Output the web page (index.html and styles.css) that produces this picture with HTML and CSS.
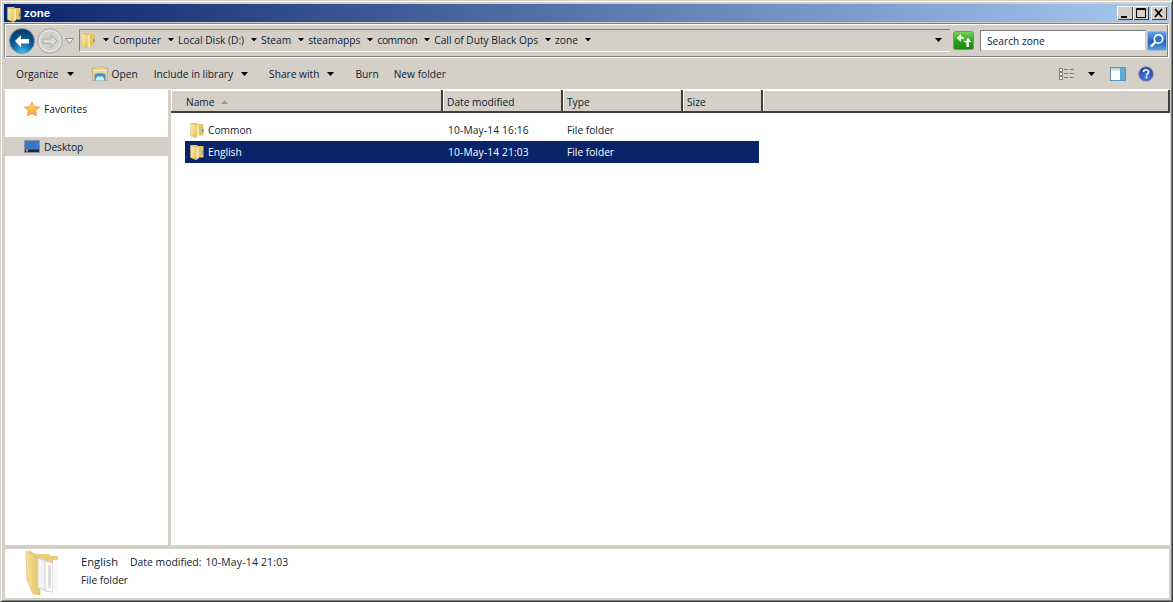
FILE: index.html
```html
<!DOCTYPE html>
<html lang="en">
<head>
<meta charset="utf-8">
<title>zone</title>
<link rel="stylesheet" href="styles.css">
</head>
<body>
<svg class="defs" width="0" height="0" aria-hidden="true">
  <defs>
    <linearGradient id="fg" x1="0" y1="0" x2="1" y2="1"><stop offset="0" stop-color="#fbf0b8"/><stop offset=".6" stop-color="#f0d47e"/><stop offset="1" stop-color="#dcb654"/></linearGradient>
    <symbol id="folder" viewBox="0 0 14 16">
      <path d="M1 1h6l1 1h5.500v11.500H8L5 15.500 1 13z" fill="#e4c266"/>
      <path d="M.5 1.500 6.500 3.500V16L.5 13.500z" fill="url(#fg)" stroke="#d8b85e" stroke-width=".5"/>
      <path d="M6.500 3.500 9 2.500V14L6.500 16z" fill="#f6e6a8"/>
      <path d="M12 7h1.500v3H12z" fill="#4f9ad0"/>
    </symbol>
    <symbol id="caret" viewBox="0 0 7 4"><path d="M0 0h7L3.500 4z" fill="#000"/></symbol>
  </defs>
</svg>
<div class="window">
  <header class="titlebar">
    <svg class="title-icon"><use href="#folder"/></svg>
    <span class="title-text">zone</span>
    <div class="win-buttons">
      <button class="win-btn"><svg width="16" height="14" viewBox="0 0 16 14"><path d="M4 10h6v2H4z" fill="#000"/></svg></button>
      <button class="win-btn"><svg width="16" height="14" viewBox="0 0 16 14"><path d="M3.500 2.500h9v9h-9zM3.500 3.500h9" fill="none" stroke="#000"/></svg></button>
      <button class="win-btn win-close"><svg width="16" height="14" viewBox="0 0 16 14"><path d="M4 3l7 8M11 3l-7 8" stroke="#000" stroke-width="1.700"/></svg></button>
    </div>
  </header>

  <nav class="addressbar">
    <div class="nav-orbs">
      <svg class="orb" viewBox="0 0 26 26">
        <defs><radialGradient id="ob" cx=".5" cy=".95" r=".9"><stop offset="0" stop-color="#36c3f2"/><stop offset=".5" stop-color="#0a5f9f"/><stop offset="1" stop-color="#063c6b"/></radialGradient></defs>
        <circle cx="13" cy="13" r="12.500" fill="url(#ob)" stroke="#8b97a5"/>
        <path d="M6 13l6-6v4h8v4.400h-8v4z" fill="#fff"/>
      </svg>
      <svg class="orb orb-off" viewBox="0 0 26 26">
        <circle cx="13" cy="13" r="12.200" fill="#d8d6d0" stroke="#a8a8a6"/>
        <circle cx="13" cy="13" r="10.500" fill="#d2d0cb" stroke="#eeeeea"/>
        <path d="M20 13l-6-6v4H6v4.400h8v4z" fill="#dcdcd8" stroke="#a9a9a6"/>
      </svg>
      <svg class="orb-drop" viewBox="0 0 9 6"><path d="M.5.500h8L4.500 5.500z" fill="#eeeeea" stroke="#8e8e8c"/></svg>
    </div>
    <div class="crumbs">
      <svg class="crumb-folder"><use href="#folder"/></svg>
      <svg class="caret"><use href="#caret"/></svg><span class="crumb">Computer</span>
      <svg class="caret"><use href="#caret"/></svg><span class="crumb">Local Disk (D:)</span>
      <svg class="caret"><use href="#caret"/></svg><span class="crumb">Steam</span>
      <svg class="caret"><use href="#caret"/></svg><span class="crumb">steamapps</span>
      <svg class="caret"><use href="#caret"/></svg><span class="crumb crumb-tight">common</span>
      <svg class="caret"><use href="#caret"/></svg><span class="crumb">Call of Duty Black Ops</span>
      <svg class="caret"><use href="#caret"/></svg><span class="crumb">zone</span>
      <svg class="caret"><use href="#caret"/></svg>
      <svg class="caret caret-end"><use href="#caret"/></svg>
    </div>
    <svg class="refresh" viewBox="0 0 21 19">
      <defs><linearGradient id="rg" x1="0" y1="0" x2="0" y2="1"><stop offset="0" stop-color="#7bd45c"/><stop offset=".5" stop-color="#2aa51c"/><stop offset="1" stop-color="#158a10"/></linearGradient></defs>
      <rect x=".5" y=".5" width="20" height="18" rx="2" fill="url(#rg)" stroke="#7f8f7f"/>
      <path d="M3.500 7 8 3v2.500c2 0 3 1 3.500 3L9 7.500H8V11z" fill="#fff"/>
      <path d="M15 6.500l3.500 4.500H16v5h-2.500v-4.500c-1.500 0-2.500-.5-3-2l3 .5v-1z" fill="#fff"/>
    </svg>
    <div class="search">Search zone</div>
    <svg class="search-btn" viewBox="0 0 20 20">
      <defs><linearGradient id="sg" x1="0" y1="0" x2="0" y2="1"><stop offset="0" stop-color="#6aa6ea"/><stop offset=".55" stop-color="#1b5fc0"/><stop offset="1" stop-color="#58a8ea"/></linearGradient></defs>
      <rect x=".5" y=".5" width="19" height="19" rx="2" fill="url(#sg)" stroke="#9db7d4"/>
      <circle cx="11.500" cy="8" r="4.200" fill="#2f74c8" stroke="#fff" stroke-width="1.700"/>
      <path d="M8.500 11 4 15.500" stroke="#fff" stroke-width="2.400"/>
    </svg>
  </nav>

  <div class="toolbar">
    <span class="tool tool-organize">Organize</span><svg class="caret tool-caret"><use href="#caret"/></svg>
    <svg class="open-icon" viewBox="0 0 16 15">
      <path d="M.5 2h5l1-1h5.500l.5 1h3v12.500H.5z" fill="#ecd48c" stroke="#c0a45e" stroke-width=".6"/>
      <path d="M1 4h14v1H1z" fill="#f8eec4"/>
      <path d="M2.500 9c0-2.500 11-2.500 11 0v5.500h-11z" fill="#3f97d0"/>
      <path d="M5 10.500h6l1.500 4h-9z" fill="#d6ebf6"/>
    </svg>
    <span class="tool tool-open">Open</span>
    <span class="tool tool-library">Include in library</span><svg class="caret tool-caret"><use href="#caret"/></svg>
    <span class="tool tool-share">Share with</span><svg class="caret tool-caret"><use href="#caret"/></svg>
    <span class="tool tool-burn">Burn</span>
    <span class="tool tool-new">New folder</span>
    <svg class="view-icon" viewBox="0 0 15 12">
      <path d="M.5.500h3v3h-3zM.5 4.500h3v3h-3zM.5 8.500h3v3h-3z" fill="#fff" stroke="#77787a"/>
      <path d="M5 1.500h4M10.500 1.500h4M5 5.500h4M10.500 5.500h4M5 9.500h4M10.500 9.500h4" stroke="#77787a"/>
    </svg>
    <svg class="caret view-caret"><use href="#caret"/></svg>
    <svg class="pane-icon" viewBox="0 0 16 14">
      <rect x=".5" y=".5" width="15" height="13" fill="#fff" stroke="#5d95b8"/>
      <rect x="1" y="1" width="14" height="2.500" fill="#bcd6e6"/>
      <rect x="10" y="1" width="5" height="12" fill="#5dabd0"/>
    </svg>
    <svg class="help-icon" viewBox="0 0 16 16">
      <defs><radialGradient id="hg" cx=".5" cy=".7" r=".7"><stop offset="0" stop-color="#4f7fe0"/><stop offset="1" stop-color="#1a3a9c"/></radialGradient></defs>
      <circle cx="8" cy="8" r="7.300" fill="url(#hg)" stroke="#8d97ab" stroke-width="1"/>
      <path d="M5.600 6c0-3 5-3 5 0 0 1.800-2 1.600-2 3.500" fill="none" stroke="#fff" stroke-width="1.700"/>
      <rect x="7.700" y="10.500" width="1.700" height="1.800" fill="#fff"/>
    </svg>
  </div>

  <div class="main">
    <aside class="sidebar">
      <div class="side-row side-fav">
        <svg class="side-icon" viewBox="0 0 16 16">
          <defs><linearGradient id="st" x1="0" y1="0" x2="0" y2="1"><stop offset="0" stop-color="#ffe06a"/><stop offset="1" stop-color="#f8a13a"/></linearGradient></defs>
          <path d="M8 .8l2.200 4.800 5.200.6-3.800 3.500 1 5.200L8 12.300l-4.600 2.600 1-5.200L.6 6.200l5.200-.6z" fill="url(#st)" stroke="#e58b3a" stroke-width=".8"/>
        </svg>
        <span>Favorites</span>
      </div>
      <div class="side-row side-desk">
        <svg class="side-icon" viewBox="0 0 16 13">
          <rect x=".5" y=".5" width="15" height="12" fill="#3f7fca" stroke="#8a93a0"/>
          <rect x="1" y="1" width="14" height="8" fill="#3b78cc"/>
          <path d="M1 9.500h14V12H1z" fill="#1a2a44"/>
          <rect x="2" y="9.500" width="2" height="2" fill="#e8b24a"/>
        </svg>
        <span>Desktop</span>
      </div>
    </aside>
    <section class="content">
      <div class="col-head">
        <div class="col col-name"><span>Name</span><svg class="sort" viewBox="0 0 7 4"><path d="M3.500 0 7 4H0z" fill="#9a9a9a"/></svg></div>
        <div class="col col-date">Date modified</div>
        <div class="col col-type">Type</div>
        <div class="col col-size">Size</div>
        <div class="col col-rest"></div>
      </div>
      <div class="files">
        <div class="file">
          <span class="f-name"><svg class="f-icon"><use href="#folder"/></svg>Common</span>
          <span class="f-date">10-May-14 16:16</span>
          <span class="f-type">File folder</span>
        </div>
        <div class="file file-sel">
          <span class="f-name"><svg class="f-icon"><use href="#folder"/></svg>English</span>
          <span class="f-date">10-May-14 21:03</span>
          <span class="f-type">File folder</span>
        </div>
      </div>
    </section>
  </div>

  <footer class="details">
    <svg class="big-folder" viewBox="0 0 36 46">
      <defs><linearGradient id="bf" x1="0" y1="0" x2="1" y2="0"><stop offset="0" stop-color="#f6e39c"/><stop offset="1" stop-color="#e5c166"/></linearGradient></defs>
      <path d="M3 0 11 4h14v2h8v32l-19 0z" fill="#e8cd7c"/>
      <path d="M1 1 15 9v36L8 44 2 30z" fill="url(#bf)" stroke="#d9b85f" stroke-width=".6"/>
      <path d="M13 8 23 12v29L13 38z" fill="#f4f4f2" stroke="#d5d5d3"/>
      <path d="M20 11l8 2 0 29-8-1z" fill="#fff" stroke="#cfcfcd"/>
      <path d="M23 15l3 1v22l-3-.5z" fill="#dcdcda"/>
      <path d="M28 10h5v32l-5 1z" fill="#f8f8f6"/>
    </svg>
    <div class="det-text">
      <div class="det-line"><span class="det-name">English</span><span class="det-label">Date modified:</span><span class="det-val">10-May-14 21:03</span></div>
      <div class="det-type">File folder</div>
    </div>
  </footer>
</div>
</body>
</html>
```
FILE: styles.css
```css
* { box-sizing: border-box; }
html, body { margin: 0; height: 100%; overflow: hidden; }
body { background: #d4d0c8; font-family: "Open Sans", "Noto Sans", sans-serif; font-size: 10.200px; color: #0d1a33; }
.defs { position: absolute; }
.window {
  width: 1173px; height: 602px; display: flex; flex-direction: column;
  border: 1px solid #d4d0c8; border-right-color: #404040; border-bottom-color: #404040;
  box-shadow: inset 1px 1px 0 #fff, inset -1px -1px 0 #808080;
  padding: 3px;
}
.titlebar {
  height: 18px; flex: none; display: flex; align-items: center;
  background: linear-gradient(90deg, #0a246a, #a6caf0);
  color: #fff; font: bold 11px "Liberation Sans", sans-serif; padding-left: 3px;
}
.title-icon { width: 14px; height: 16px; margin-top: 1px; }
.title-text { margin-left: 3px; font-size: 11.500px; }
.win-buttons { margin-left: auto; display: flex; margin-right: 2px; }
.win-btn {
  width: 16px; height: 14px; padding: 0; border: 0; background: #d4d0c8; display: block;
  box-shadow: inset 1px 1px 0 #fff, inset -1px -1px 0 #404040;
}
.win-close { margin-left: 2px; }
.addressbar {
  height: 35px; flex: none; margin: 1px 0 0 0; display: flex; align-items: center;
  border: 1px solid #808080; border-right-color: #fff; border-bottom-color: #fff;
  box-shadow: inset 1px 1px 0 #fff, inset -1px -1px 0 #808080;
  padding: 0 1px 0 4px;
}
.nav-orbs { display: flex; align-items: center; }
.orb { width: 26px; height: 26px; flex: none; }
.orb-off { margin-left: 2px; }
.orb-drop { width: 9px; height: 6px; margin-left: 2px; }
.crumbs {
  flex: 1; height: 23px; margin-left: 5px; display: flex; align-items: center;
  border-left: 1px solid #808080; border-top: 1px solid #808080; border-bottom: 1px solid #fff;
  padding-left: 1px; padding-bottom: 2px;
}
.crumb-folder { width: 14px; height: 16px; }
.caret { width: 7px; height: 4px; flex: none; }
.crumbs .caret { width: 6px; height: 3.500px; margin: 0 4px 0 7px; }
.crumbs > .crumb-folder + .caret { margin-left: 8px; margin-right: 4px; }
.crumb { white-space: nowrap; }
.crumb-tight { letter-spacing: -.4px; }
.crumbs .caret-end { width: 7px; height: 4px; margin-left: auto; margin-right: 8px; }
.refresh { width: 21px; height: 19px; flex: none; margin-left: 3px; }
.search {
  width: 166px; height: 21px; flex: none; margin-left: 6px; background: #fff; padding: 4px 0 0 7px;
  box-shadow: inset 1px 1px 0 #808080, inset -1px -1px 0 #d4d0c8;
}
.search-btn { width: 20px; height: 20px; flex: none; margin-left: 1px; }
.toolbar {
  height: 32px; flex: none; display: flex; align-items: center; padding-left: 12px; padding-right: 15px;
  border-bottom: 1px solid #fff;
}
.tool { white-space: nowrap; }
.tool-caret { margin-left: 8px; }
.open-icon { width: 16px; height: 15px; margin-left: 18px; }
.tool-open { margin-left: 4px; }
.tool-library { margin-left: 16px; }
.tool-share { margin-left: 21px; }
.tool-burn { margin-left: 21px; }
.tool-new { margin-left: 15px; }
.view-icon { width: 15px; height: 12px; margin-left: auto; }
.view-caret { margin-left: 14px; }
.pane-icon { width: 16px; height: 14px; margin-left: 15px; }
.help-icon { width: 16px; height: 16px; margin-left: 12px; }
.main { flex: 1; min-height: 0; display: flex; }
.sidebar { width: 163px; flex: none; background: #fff; padding-top: 9px; margin-left: 1px; }
.side-row { display: flex; align-items: center; height: 19px; }
.side-icon { width: 16px; height: 16px; margin-left: 19px; margin-right: 4px; flex: none; }
.side-fav { margin-bottom: 19px; }
.side-desk { background: #d4d0c8; }
.side-desk .side-icon { height: 13px; }
.content { flex: 1; margin-left: 3px; background: #fff; min-width: 0; display: flex; flex-direction: column; margin-right: -1px; }
.col-head { height: 23px; flex: none; display: flex; background: #d4d0c8; border-bottom: 2px solid #404040; box-shadow: inset 0 1px 0 #fff; }
.col { border-right: 2px solid #404040; box-shadow: inset 1px 1px 0 #fff; display: flex; align-items: center; padding-left: 4px; padding-top: 2px; }
.col-name { width: 272px; padding-left: 15px; gap: 7px; }
.col-date { width: 120px; }
.col-type { width: 120px; }
.col-size { width: 80px; }
.col-rest { flex: 1; }
.sort { width: 7px; height: 4px; }
.files { padding: 6px 0 0 14px; }
.file { width: 574px; height: 22px; display: flex; align-items: center; }
.file-sel { background: #0a246a; color: #fff; }
.f-name { width: 263px; display: flex; align-items: center; padding-left: 5px; }
.f-icon { width: 14px; height: 16px; margin-right: 4px; }
.f-date { width: 119px; letter-spacing: .15px; }
.f-type { white-space: nowrap; }
.details {
  height: 49px; flex: none; margin-top: 4px; margin-left: 1px; background: #fff; display: flex;
}
.big-folder { width: 36px; height: 46px; margin: 1px 0 0 20px; flex: none; }
.det-text { margin-left: 20px; padding-top: 5px; }
.det-line { display: flex; align-items: baseline; height: 19px; }
.det-name { font-size: 11.200px; margin-right: 12px; }
.det-label { font-size: 10.400px; }
.det-val { margin-left: 4px; font-size: 10.400px; letter-spacing: .2px; }
```
